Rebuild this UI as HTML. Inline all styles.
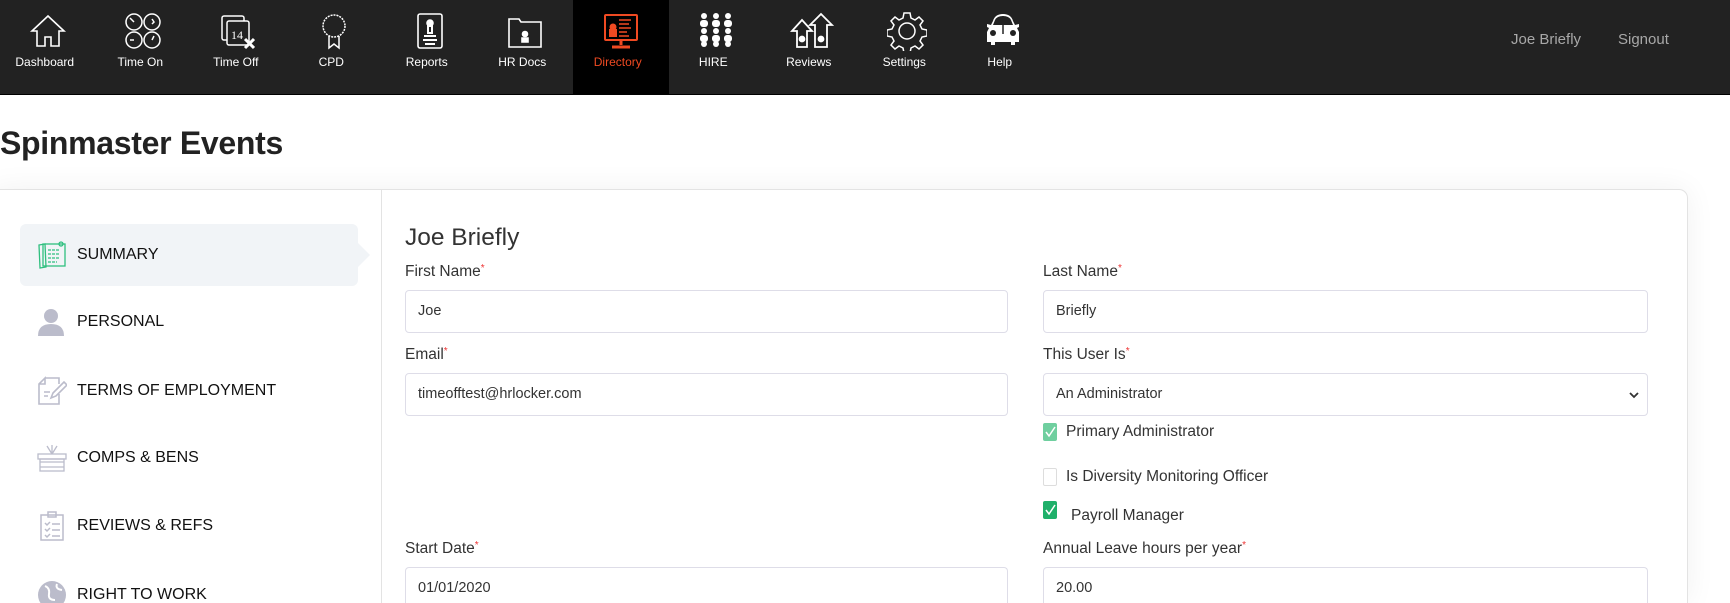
<!DOCTYPE html>
<html style="width:1730px;height:603px;overflow:hidden"><head><meta charset="utf-8"><style>
*{box-sizing:border-box;margin:0;padding:0}
body{width:1730px;height:603px;overflow:hidden;background:#fff;font-family:"Liberation Sans",Arial,sans-serif;position:relative}
.nav{position:absolute;left:0;top:0;width:1730px;height:95px;background:#222;border-bottom:1px solid #000}
.it{position:absolute;top:0;width:95.5px;height:94px;color:#fff;font-size:12px;text-align:center}
.it svg{position:absolute;left:50%;top:11px;transform:translateX(-50%)}
.it span{position:absolute;left:-3px;right:3px;top:55px}
.it.act{background:#000;color:#f04a22}
.ru{position:absolute;top:31px;color:#a8a8a8;font-size:15px}
h1{position:absolute;left:0;top:125px;font-size:32px;font-weight:bold;color:#222;letter-spacing:-0.3px}
.card{position:absolute;left:-10px;top:189px;width:1698px;height:414px;border:1px solid #e3e3e3;border-bottom:none;border-radius:9px 9px 0 0;box-shadow:0 0 30px rgba(0,0,0,.06);background:#fff}
.div{position:absolute;left:381px;top:190px;width:1px;height:413px;background:#e3e3e3}
.act-item{position:absolute;left:20px;top:224px;width:338px;height:62px;background:#f1f4f7;border-radius:6px}
.tri{position:absolute;left:358px;top:243px;width:0;height:0;border-top:12px solid transparent;border-bottom:12px solid transparent;border-left:12px solid #f1f4f7}
.si{position:absolute;left:77px;font-size:16px;color:#111;line-height:20px}
.sic{position:absolute;left:37px}
.lbl{position:absolute;font-size:15.5px;color:#333;line-height:18px}
.lbl i{color:#e33;font-style:normal;font-size:10px;vertical-align:top;position:relative;top:-3px}
.inp{position:absolute;height:43px;border:1px solid #dedde8;border-radius:4px;font-size:14.5px;color:#333;padding-left:12px;line-height:41px}
.cb{position:absolute;width:14px;height:18px;border-radius:2px}
</style></head><body>
<div class="nav">
 <div class="it" style="left:0"><svg width="40" height="40" viewBox="0 0 40 40" fill="none" stroke="#fff" stroke-width="1.6"><path d="M4 20 L20 5 L36 20 H31 V35 H23 V26 H17 V35 H9 V20 Z"/></svg><span>Dashboard</span></div>
 <div class="it" style="left:95.5px"><svg width="40" height="40" viewBox="0 0 40 40" fill="none" stroke="#fff" stroke-width="1.5"><circle cx="11" cy="11" r="8"/><circle cx="29" cy="11" r="8"/><circle cx="11" cy="29" r="8"/><circle cx="29" cy="29" r="8"/><path d="M7 7l4 4M29 8l2 3-2 2M7 29h4M29 29l2-4"/></svg><span>Time On</span></div>
 <div class="it" style="left:191px"><svg width="40" height="40" viewBox="0 0 40 40" fill="none" stroke="#fff" stroke-width="1.5"><rect x="3" y="5" width="22" height="24" rx="2"/><rect x="8" y="10" width="22" height="24" rx="2" fill="#222"/><text x="12" y="28" font-size="12" fill="#fff" stroke="none" font-family="Liberation Serif">14</text><path d="M26 28l9 9M35 28l-9 9" stroke-width="3"/></svg><span>Time Off</span></div>
 <div class="it" style="left:286.5px"><svg width="40" height="40" viewBox="0 0 40 40" fill="none" stroke="#fff" stroke-width="1.5"><circle cx="20" cy="15" r="11" stroke-dasharray="2 1"/><path d="M15 25v12l5-4 5 4V25"/></svg><span>CPD</span></div>
 <div class="it" style="left:382px"><svg width="40" height="40" viewBox="0 0 40 40" fill="none" stroke="#fff" stroke-width="1.6"><rect x="8" y="3" width="24" height="34" rx="2"/><circle cx="20" cy="12" r="3" fill="#fff"/><path d="M18 15h4v7h-4zM14 25h12M13 29h14M15 33h10" stroke-width="2"/></svg><span>Reports</span></div>
 <div class="it" style="left:477.5px"><svg width="40" height="40" viewBox="0 0 40 40" fill="none" stroke="#fff" stroke-width="1.6"><path d="M4 8h10l2 3h20v25H4z"/><circle cx="20" cy="23" r="2.5" fill="#fff"/><path d="M17 27h6v4h-6z" fill="#fff"/></svg><span>HR Docs</span></div>
 <div class="it act" style="left:573px"><svg width="40" height="40" viewBox="0 0 40 40" fill="none" stroke="#f04a22" stroke-width="2"><rect x="4" y="4" width="32" height="25" rx="1"/><path d="M20 29v5M11 36h18" stroke-width="3"/><circle cx="12" cy="16" r="2.5" fill="#f04a22"/><rect x="9" y="19" width="6" height="6" fill="#f04a22"/><path d="M18 9h12M18 13h10M18 17h12M18 21h8M18 25h10" stroke-width="1.6"/></svg><span>Directory</span></div>
 <div class="it" style="left:668.5px"><svg width="40" height="40" viewBox="0 0 40 40" fill="#fff"><g><circle cx="8" cy="5" r="3"/><circle cx="20" cy="5" r="3"/><circle cx="32" cy="5" r="3"/><rect x="4" y="9" width="8" height="7" rx="3"/><rect x="16" y="9" width="8" height="7" rx="3"/><rect x="28" y="9" width="8" height="7" rx="3"/><circle cx="8" cy="20" r="3"/><circle cx="20" cy="20" r="3"/><circle cx="32" cy="20" r="3"/><rect x="4" y="24" width="8" height="7" rx="3"/><rect x="16" y="24" width="8" height="7" rx="3"/><rect x="28" y="24" width="8" height="7" rx="3"/><circle cx="8" cy="33" r="3"/><circle cx="20" cy="33" r="3"/><circle cx="32" cy="33" r="3"/></g></svg><span>HIRE</span></div>
 <div class="it" style="left:764px"><svg width="44" height="40" viewBox="0 0 44 40" fill="none" stroke="#fff" stroke-width="1.8"><path d="M2 20L12 9l10 11h-5v16H7V20z"/><path d="M20 14L31 3l11 11h-5v22H25V14z"/><circle cx="12" cy="28" r="2.5" fill="#fff"/><circle cx="31" cy="28" r="2.5" fill="#fff"/></svg><span>Reviews</span></div>
 <div class="it" style="left:859.5px"><svg width="40" height="40" viewBox="0 0 40 40" fill="none" stroke="#fff" stroke-width="1.5"><path d="M17 2h6l1 5 4 2 4-3 4 4-3 4 2 4 5 1v6l-5 1-2 4 3 4-4 4-4-3-4 2-1 5h-6l-1-5-4-2-4 3-4-4 3-4-2-4-5-1v-6l5-1 2-4-3-4 4-4 4 3 4-2z"/><circle cx="20" cy="20" r="8"/></svg><span>Settings</span></div>
 <div class="it" style="left:955px"><svg width="40" height="40" viewBox="0 0 40 40" fill="#fff"><path d="M10 10Q12 3 20 3T30 10l2 4 4-1v3l-2 1 2 4v10h-4v3h-4v-3H12v3H8v-3H4V21l2-4-2-1v-3l4 1z"/><path d="M12 9Q14 5 20 5T28 9l2 5H10z" fill="#222"/><circle cx="10" cy="22" r="3" fill="#222"/><circle cx="30" cy="22" r="3" fill="#222"/><path d="M20 5v18" stroke="#222" stroke-width="1.5"/></svg><span>Help</span></div>
 <div class="ru" style="left:1511px">Joe Briefly</div>
 <div class="ru" style="left:1618px">Signout</div>
</div>
<h1>Spinmaster Events</h1>
<div class="card"></div>
<div class="div"></div>
<div class="act-item"></div><div class="tri"></div>

<svg class="sic" style="top:241px" width="30" height="28" viewBox="0 0 30 28" fill="none" stroke="#2fbf7f" stroke-width="1.3"><path d="M2 4l6-1 1 23-6 1z"/><rect x="6" y="3" width="22" height="22"/><circle cx="24" cy="3" r="2"/><path d="M11 9h12M11 13h12M11 17h12M11 21h9" stroke-dasharray="3 1"/></svg>
<div class="si" style="top:245px">SUMMARY</div>
<svg class="sic" style="top:308px" width="30" height="30" viewBox="0 0 30 30" fill="#bbbccb"><circle cx="14" cy="8" r="7"/><path d="M1 28Q1 16 14 16T27 28z"/></svg>
<div class="si" style="top:312px">PERSONAL</div>
<svg class="sic" style="top:376px" width="30" height="30" viewBox="0 0 30 30" fill="none" stroke="#bbbccb" stroke-width="1.6"><path d="M8 2h14v6M22 18v10H2V8l6-6v6H2"/><path d="M14 22l2-5 11-11 3 3-11 11zM7 16h6M7 20h4"/></svg>
<div class="si" style="top:381px">TERMS OF EMPLOYMENT</div>
<svg class="sic" style="top:443px" width="30" height="30" viewBox="0 0 30 30" fill="none" stroke="#bbbccb" stroke-width="1.3"><rect x="1" y="11" width="28" height="5"/><rect x="3" y="16" width="24" height="12"/><path d="M3 19h24M3 24h24M15 11L10 3M15 11l5-8M15 11V2"/></svg>
<div class="si" style="top:448px">COMPS &amp; BENS</div>
<svg class="sic" style="top:511px" width="30" height="30" viewBox="0 0 30 30" fill="none" stroke="#bbbccb" stroke-width="1.5"><rect x="4" y="4" width="22" height="25"/><rect x="11" y="1" width="8" height="5"/><path d="M8 12l2 2 3-3M15 13h8M8 18l2 2 3-3M15 19h8M8 24l2 2 3-3M15 25h8"/></svg>
<div class="si" style="top:516px">REVIEWS &amp; REFS</div>
<svg class="sic" style="top:580px" width="30" height="23" viewBox="0 0 30 23"><circle cx="15" cy="15" r="14" fill="#bbbccb"/><path d="M8 6q5 2 4 8t6 6M20 4q-2 5 5 6" stroke="#fff" stroke-width="2" fill="none"/></svg>
<div class="si" style="top:585px">RIGHT TO WORK</div>

<div style="position:absolute;left:405px;top:224px;font-size:24.5px;color:#333">Joe Briefly</div>
<div class="lbl" style="left:405px;top:263px">First Name<i>*</i></div>
<div class="inp" style="left:405px;top:290px;width:603px">Joe</div>
<div class="lbl" style="left:405px;top:346px">Email<i>*</i></div>
<div class="inp" style="left:405px;top:373px;width:603px">timeofftest@hrlocker.com</div>
<div class="lbl" style="left:405px;top:540px">Start Date<i>*</i></div>
<div class="inp" style="left:405px;top:567px;width:603px;height:36px;border-bottom:none;border-radius:4px 4px 0 0">01/01/2020</div>

<div class="lbl" style="left:1043px;top:263px">Last Name<i>*</i></div>
<div class="inp" style="left:1043px;top:290px;width:605px">Briefly</div>
<div class="lbl" style="left:1043px;top:346px">This User Is<i>*</i></div>
<div class="inp" style="left:1043px;top:373px;width:605px;padding-left:12px">An Administrator<svg style="position:absolute;right:8px;top:17px" width="10" height="8" viewBox="0 0 10 8"><path d="M1 2l4 4 4-4" stroke="#333" stroke-width="1.8" fill="none"/></svg></div>
<div class="cb" style="left:1043px;top:423px;background:#6fcf9f"><svg width="14" height="18"><path d="M3 9l3 4 6-9" stroke="#fff" stroke-width="1.5" fill="none"/></svg></div>
<div class="lbl" style="left:1066px;top:423px">Primary Administrator</div>
<div class="cb" style="left:1043px;top:468px;border:1px solid #ddd;background:#fff"></div>
<div class="lbl" style="left:1066px;top:468px">Is Diversity Monitoring Officer</div>
<div class="cb" style="left:1043px;top:501px;background:#1fb06a"><svg width="14" height="18"><path d="M3 9l3 4 6-9" stroke="#fff" stroke-width="1.5" fill="none"/></svg></div>
<div class="lbl" style="left:1071px;top:507px">Payroll Manager</div>
<div class="lbl" style="left:1043px;top:540px">Annual Leave hours per year<i>*</i></div>
<div class="inp" style="left:1043px;top:567px;width:605px;height:36px;border-bottom:none;border-radius:4px 4px 0 0">20.00</div>
</body></html>
